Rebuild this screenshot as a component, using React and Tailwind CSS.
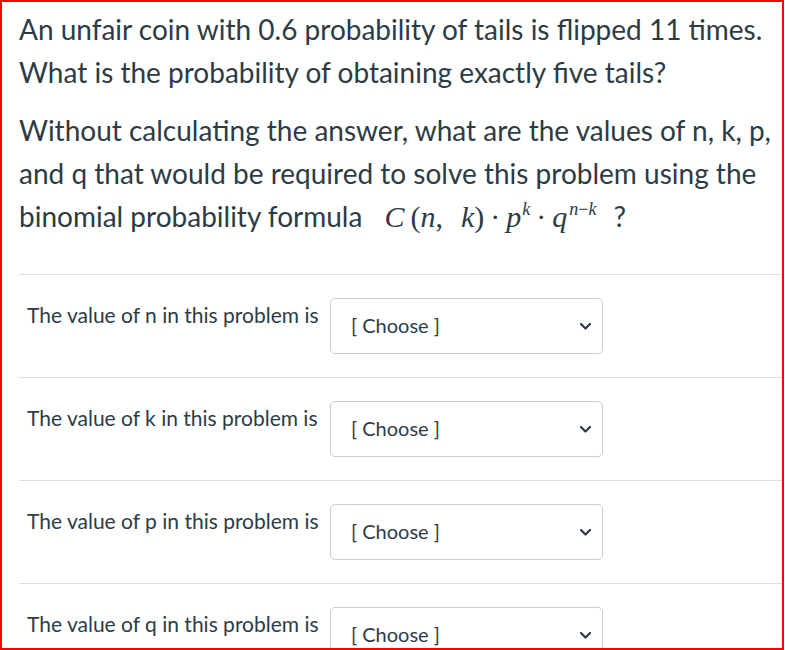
import React from 'react';

const rows = ['n', 'k', 'p', 'q'];

const Chevron = () => (
    <svg width="11" height="7" viewBox="0 0 11 7" className="shrink-0">
        <polyline points="1,1 5.5,5.5 10,1" fill="none" stroke="#2d3b45" strokeWidth="2.2" strokeLinecap="round" strokeLinejoin="round" />
    </svg>
);

const Formula = () => (
    <span className="ml-[22px] inline-block leading-none text-[30px] text-[#2d3b45]" style={{ fontFamily: '"Liberation Serif", "DejaVu Serif", serif' }}>
        <i>C</i>
        <span className="ml-[6px]">(</span>
        <i>n</i>
        <span>,</span>
        <i className="ml-[18px]">k</i>
        <span>)</span>
        <span className="mx-[6px]">·</span>
        <i>p</i>
        <sup className="text-[18px] italic -top-[12px] ml-[1px]">k</sup>
        <span className="mx-[6px]">·</span>
        <i>q</i>
        <sup className="text-[18px] -top-[12px] ml-[2px]"><i>n</i>−<i>k</i></sup>
    </span>
);

const App = () => {
    return (
        <div className="bg-white min-h-[650px]">
            <div
                className="w-[784px] h-[650px] overflow-hidden border-2 border-[#ff0000] pl-[17px] pt-[6px] text-[#2d3b45]"
                style={{ fontFamily: 'Lato, "Liberation Sans", sans-serif' }}
            >
                {/* Question */}
                <div className="text-[28px] leading-[43px]">
                    <p>An unfair coin with 0.6 probability of tails is flipped 11 times. What is the probability of obtaining exactly five tails?</p>
                    <p className="mt-[15px]">
                        Without calculating the answer, what are the values of n, k, p, and q that would be required to solve this problem using the binomial probability formula
                        <Formula />
                        <span className="ml-[17px]">?</span>
                    </p>
                </div>

                {/* Answer rows */}
                <div className="mt-[36px]">
                    {rows.map((v) => (
                        <div key={v} className="flex items-start border-t border-[#e0e0e0] pt-[23px] pb-[23px]">
                            <div className="w-[311px] pl-[8px] pt-[3px] text-[21px] leading-[28px] whitespace-nowrap">
                                The value of {v} in this problem is
                            </div>
                            <div className="flex items-center justify-between w-[273px] h-[56px] border border-[#c7cdd1] rounded-[5px] pl-[20px] pr-[11px] bg-white">
                                <span className="text-[20px] leading-[28px] pb-[2px]">[ Choose ]</span>
                                <Chevron />
                            </div>
                        </div>
                    ))}
                </div>
            </div>
        </div>
    );
};

export default App;
